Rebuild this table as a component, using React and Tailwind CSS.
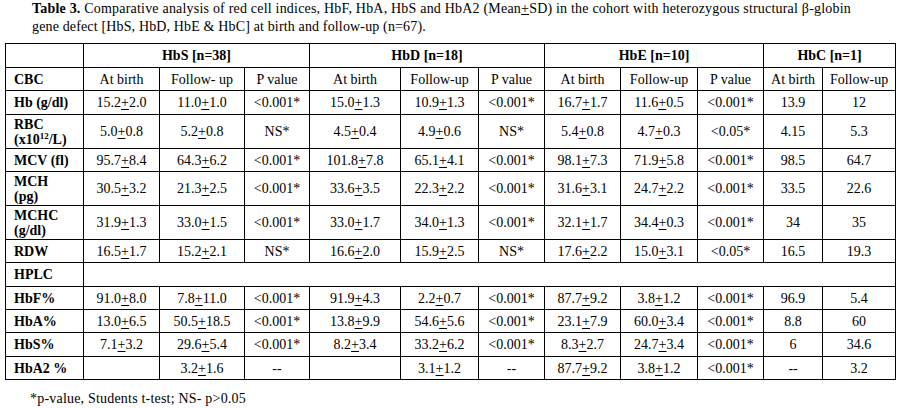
const u = (s) => {
  // render "15.2+2.0" with an underlined plus (the ± of the source)
  if (!s.includes('+')) return s;
  const [a, b] = s.split('+');
  return (
    <>
      {a}
      <span className="underline underline-offset-[2px]">+</span>
      {b}
    </>
  );
};

const widths = [78, 76, 85, 65, 91, 78, 66, 76, 77, 66, 59, 73];

const rows = [
  { label: ['Hb (g/dl)'], h: 'h-[24px]', v: ['15.2+2.0', '11.0+1.0', '<0.001*', '15.0+1.3', '10.9+1.3', '<0.001*', '16.7+1.7', '11.6+0.5', '<0.001*', '13.9', '12'] },
  { label: ['RBC', <>(x10<sup className="text-[9px]">12</sup>/L)</>], h: 'h-[34px]', v: ['5.0+0.8', '5.2+0.8', 'NS*', '4.5+0.4', '4.9+0.6', 'NS*', '5.4+0.8', '4.7+0.3', '<0.05*', '4.15', '5.3'] },
  { label: ['MCV (fl)'], h: 'h-[23px]', v: ['95.7+8.4', '64.3+6.2', '<0.001*', '101.8+7.8', '65.1+4.1', '<0.001*', '98.1+7.3', '71.9+5.8', '<0.001*', '98.5', '64.7'] },
  { label: ['MCH', '(pg)'], h: 'h-[34px]', v: ['30.5+3.2', '21.3+2.5', '<0.001*', '33.6+3.5', '22.3+2.2', '<0.001*', '31.6+3.1', '24.7+2.2', '<0.001*', '33.5', '22.6'] },
  { label: ['MCHC', '(g/dl)'], h: 'h-[34px]', v: ['31.9+1.3', '33.0+1.5', '<0.001*', '33.0+1.7', '34.0+1.3', '<0.001*', '32.1+1.7', '34.4+0.3', '<0.001*', '34', '35'] },
  { label: ['RDW'], h: 'h-[23px]', v: ['16.5+1.7', '15.2+2.1', 'NS*', '16.6+2.0', '15.9+2.5', 'NS*', '17.6+2.2', '15.0+3.1', '<0.05*', '16.5', '19.3'] },
];

const hplc = [
  { label: 'HbF%', h: 'h-[23px]', v: ['91.0+8.0', '7.8+11.0', '<0.001*', '91.9+4.3', '2.2+0.7', '<0.001*', '87.7+9.2', '3.8+1.2', '<0.001*', '96.9', '5.4'] },
  { label: 'HbA%', h: 'h-[23px]', v: ['13.0+6.5', '50.5+18.5', '<0.001*', '13.8+9.9', '54.6+5.6', '<0.001*', '23.1+7.9', '60.0+3.4', '<0.001*', '8.8', '60'] },
  { label: 'HbS%', h: 'h-[24px]', v: ['7.1+3.2', '29.6+5.4', '<0.001*', '8.2+3.4', '33.2+6.2', '<0.001*', '8.3+2.7', '24.7+3.4', '<0.001*', '6', '34.6'] },
  { label: 'HbA2 %', h: 'h-[23px]', v: ['', '3.2+1.6', '--', '', '3.1+1.2', '--', '87.7+9.2', '3.8+1.2', '<0.001*', '--', '3.2'] },
];

const td = 'border border-black text-center align-middle p-0';
const th = 'border border-black text-left align-middle font-bold pl-[8px] pr-0 py-0';

export default function App() {
  return (
    <div className="w-[902px] h-[408px] bg-white text-black font-['Liberation_Serif',serif] text-[14px] leading-[18px] pl-[5px]">
      {/* Caption */}
      <div className="pl-[27px] w-[846px]">
        <p className="whitespace-nowrap text-justify [text-align-last:justify] tracking-[0.2px]">
          <b>Table 3.</b> Comparative analysis of red cell indices, HbF, HbA, HbS and HbA2 (Mean
          <span className="underline">+</span>SD) in the cohort with heterozygous structural β-globin
        </p>
        <p className="whitespace-nowrap tracking-[0.15px]">
          gene defect [HbS, HbD, HbE &amp; HbC] at birth and follow-up (n=67).
        </p>
      </div>

      <table className="mt-[7px] border-collapse table-fixed w-[891px] border border-black leading-[15px]">
        <colgroup>
          {widths.map((w, i) => (
            <col key={i} style={{ width: w }} />
          ))}
        </colgroup>
        <tbody>
          <tr className="h-[24px]">
            <td className={td}></td>
            <td colSpan={3} className={td + ' font-bold'}>HbS [n=38]</td>
            <td colSpan={3} className={td + ' font-bold'}>HbD [n=18]</td>
            <td colSpan={3} className={td + ' font-bold'}>HbE [n=10]</td>
            <td colSpan={2} className={td + ' font-bold'}>HbC [n=1]</td>
          </tr>
          <tr className="h-[23px]">
            <td className={th}>CBC</td>
            {['At birth', 'Follow- up', 'P value', 'At birth', 'Follow-up', 'P value', 'At birth', 'Follow-up', 'P value', 'At birth', 'Follow-up'].map((t, i) => (
              <td key={i} className={td}>{t}</td>
            ))}
          </tr>
          {rows.map((r, i) => (
            <tr key={i} className={r.h}>
              <td className={th}>
                {r.label.map((l, j) => (
                  <div key={j}>{l}</div>
                ))}
              </td>
              {r.v.map((v, j) => (
                <td key={j} className={td}>{u(v)}</td>
              ))}
            </tr>
          ))}
          <tr className="h-[24px]">
            <td className={th}>HPLC</td>
            <td colSpan={11} className={td}></td>
          </tr>
          {hplc.map((r, i) => (
            <tr key={i} className={r.h}>
              <td className={th}>{r.label}</td>
              {r.v.map((v, j) => (
                <td key={j} className={td}>{u(v)}</td>
              ))}
            </tr>
          ))}
        </tbody>
      </table>

      <p className="pl-[25px] mt-[10px] tracking-[0.2px]">*p-value, Students t-test; NS- p&gt;0.05</p>
    </div>
  );
}
